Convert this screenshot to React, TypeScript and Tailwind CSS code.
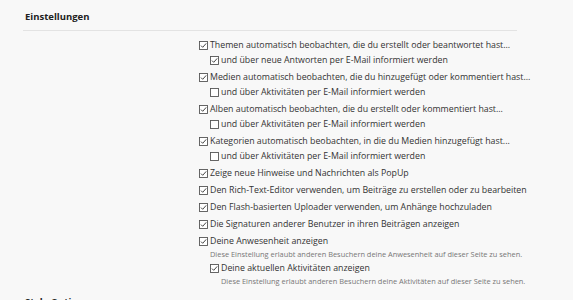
import React from 'react';

interface Option {
  label: string;
  checked: boolean;
  hint?: string;
  children?: Option[];
}

const options: Option[] = [
  {
    label: 'Themen automatisch beobachten, die du erstellt oder beantwortet hast...',
    checked: true,
    children: [{ label: 'und über neue Antworten per E-Mail informiert werden', checked: true }],
  },
  {
    label: 'Medien automatisch beobachten, die du hinzugefügt oder kommentiert hast...',
    checked: true,
    children: [{ label: 'und über Aktivitäten per E-Mail informiert werden', checked: false }],
  },
  {
    label: 'Alben automatisch beobachten, die du erstellt oder kommentiert hast...',
    checked: true,
    children: [{ label: 'und über Aktivitäten per E-Mail informiert werden', checked: false }],
  },
  {
    label: 'Kategorien automatisch beobachten, in die du Medien hinzugefügt hast...',
    checked: true,
    children: [{ label: 'und über Aktivitäten per E-Mail informiert werden', checked: false }],
  },
  { label: 'Zeige neue Hinweise und Nachrichten als PopUp', checked: true },
  { label: 'Den Rich-Text-Editor verwenden, um Beiträge zu erstellen oder zu bearbeiten', checked: true },
  { label: 'Den Flash-basierten Uploader verwenden, um Anhänge hochzuladen', checked: true },
  { label: 'Die Signaturen anderer Benutzer in ihren Beiträgen anzeigen', checked: true },
  {
    label: 'Deine Anwesenheit anzeigen',
    checked: true,
    hint: 'Diese Einstellung erlaubt anderen Besuchern deine Anwesenheit auf dieser Seite zu sehen.',
    children: [
      {
        label: 'Deine aktuellen Aktivitäten anzeigen',
        checked: true,
        hint: 'Diese Einstellung erlaubt anderen Besuchern deine Aktivitäten auf dieser Seite zu sehen.',
      },
    ],
  },
];

function Box({ checked }: { checked: boolean }) {
  return (
    <svg width="9" height="9" viewBox="0 0 9 9" className="shrink-0 mr-[2px]">
      <rect x="0.5" y="0.5" width="8" height="8" fill="#fff" stroke="#555" strokeWidth="0.9" />
      {checked && (
        <polyline points="2,4.6 3.7,6.3 7.2,2.4" fill="none" stroke="#444" strokeWidth="1" />
      )}
    </svg>
  );
}

function Item({ opt, sub }: { opt: Option; sub?: boolean }) {
  return (
    <li className={sub ? 'pl-[11px]' : 'mt-[2px]'}>
      <label className="flex items-center h-[15px] whitespace-nowrap">
        <Box checked={opt.checked} />
        <span>{opt.label}</span>
      </label>
      {opt.hint && (
        <p className="pl-[11px] text-[7.4px] leading-[10px] text-[#777] whitespace-nowrap">{opt.hint}</p>
      )}
      {opt.children && (
        <ul className={opt.hint ? 'mt-[2px]' : ''}>
          {opt.children.map((c) => (
            <Item key={c.label} opt={c} sub />
          ))}
        </ul>
      )}
    </li>
  );
}

export default function App() {
  return (
    <div className="h-screen overflow-hidden bg-[#f8f8f8] font-['Open_Sans',sans-serif] text-[#333]">
      <div className="ml-[23px] w-[494px]">
        <h3 className="pt-[9px] pb-[6px] pl-[2px] text-[9.5px] leading-[15px] font-bold text-[#222] border-b border-[#e3e3e3]">
          Einstellungen
        </h3>
        <div className="flex pt-[5px]">
          <div className="w-[176px] shrink-0" />
          <ul className="text-[8.8px]">
            {options.map((o) => (
              <Item key={o.label} opt={o} />
            ))}
          </ul>
        </div>
        <h3 className="mt-[8px] pl-[2px] text-[9.5px] leading-[15px] font-bold text-[#222]">Style Options</h3>
      </div>
    </div>
  );
}
